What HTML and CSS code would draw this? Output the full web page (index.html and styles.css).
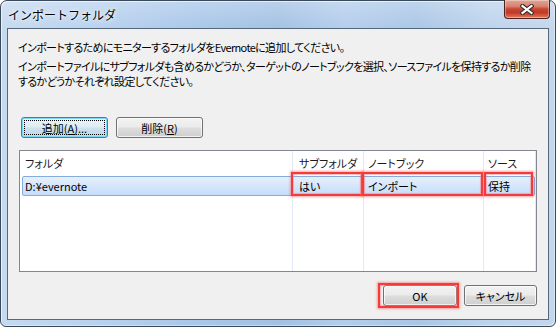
FILE: index.html
```html
<!DOCTYPE html>
<html lang="ja">
<head>
<meta charset="utf-8">
<link rel="stylesheet" href="styles.css">
</head>
<body>
<div class="window">
  <div class="titlebar">
    <span class="title">インポートフォルダ</span>
    <div class="close">
      <svg width="14" height="11" viewBox="0 0 14 11">
        <path d="M2.5 2 L11.5 9 M11.5 2 L2.5 9" stroke="#3a2a2a" stroke-width="4.2" stroke-linecap="square"/>
        <path d="M2.5 2 L11.5 9 M11.5 2 L2.5 9" stroke="#ffffff" stroke-width="2.2" stroke-linecap="square"/>
      </svg>
    </div>
  </div>
  <div class="client">
    <p class="desc">インポートするためにモニターするフォルダをEvernoteに追加してください。</p>
    <p class="desc desc2">インポートファイルにサブフォルダも含めるかどうか、ターゲットのノートブックを選択、ソースファイルを保持するか削除<br>するかどうかそれぞれ設定してください。</p>
    <div class="toolbar">
      <button class="btn btn-default"><span class="focus">追加(<u>A</u>)...</span></button>
      <button class="btn">削除(<u>R</u>)</button>
    </div>
    <div class="listview">
      <div class="lv-head">
        <div class="hcell c1">フォルダ</div>
        <div class="hcell c2">サブフォルダ</div>
        <div class="hcell c3">ノートブック</div>
        <div class="hcell c4">ソース</div>
      </div>
      <div class="lv-body">
        <div class="lv-row">
          <div class="rcell r1">D:¥evernote</div>
          <div class="rcell r2">はい</div>
          <div class="rcell r3">インポート</div>
          <div class="rcell r4">保持</div>
        </div>
      </div>
    </div>
    <div class="footer">
      <button class="btn btn-ok">OK</button>
      <button class="btn btn-cancel">キャンセル</button>
    </div>
  </div>
  <div class="mark mark-sub"></div>
  <div class="mark mark-nb"></div>
  <div class="mark mark-src"></div>
  <div class="mark mark-ok"></div>
</div>
</body>
</html>
```

FILE: styles.css
```css
* { box-sizing: border-box; }
html, body { margin: 0; padding: 0; }
body {
  width: 556px;
  height: 327px;
  overflow: hidden;
  background: #ffffff;
  font-family: "Noto Sans CJK JP", "Noto Sans", sans-serif;
  color: #000;
}
.window {
  position: relative;
  width: 556px;
  height: 327px;
  border: 1px solid #3b4a5a;
  border-radius: 7px 7px 6px 6px;
  padding: 0 6px 6px 6px;
  display: flex;
  flex-direction: column;
  background:
    linear-gradient(to bottom, rgba(255,255,255,0.25), rgba(255,255,255,0) 30px),
    linear-gradient(to right, #c6daef 0%, #b7d1ee 18%, #a9c7e9 35%, #a3c1e3 50%, #b2cdec 62%, #a9c6e6 75%, #bcd3ec 88%, #c3d7ec 100%);
  box-shadow: inset 1px 1px 0 rgba(255,255,255,0.6), inset -1px -1px 0 rgba(255,255,255,0.4);
}
.titlebar {
  height: 27px;
  flex: none;
  display: flex;
  align-items: center;
  padding-left: 1px;
}
.title {
  font-size: 12px;
  line-height: 14px;
  color: #000;
  margin-top: 1px;
  text-shadow: 0 0 6px rgba(255,255,255,0.9), 0 0 3px rgba(255,255,255,0.9);
}
.close {
  position: absolute;
  top: -1px;
  right: 5px;
  width: 46px;
  height: 19px;
  border: 1px solid #4a2320;
  border-top: none;
  border-radius: 0 0 4px 4px;
  background: linear-gradient(to bottom, #e3a597 0%, #d8836f 35%, #c64632 50%, #c23a27 70%, #d4634a 90%, #e08a6e 100%);
  box-shadow: inset 0 0 0 1px rgba(255,255,255,0.35);
  display: flex;
  align-items: center;
  justify-content: center;
}
.close svg { display: block; }
.client {
  flex: 1;
  border: 1px solid #56687c;
  background: #f0f0f0;
  display: flex;
  flex-direction: column;
  font-size: 11px;
}
.desc {
  margin: 11px 0 0 10px;
  line-height: 14px;
  font-size: 11px;
  font-feature-settings: "palt";
  letter-spacing: -0.65px;
  white-space: nowrap;
}
.desc2 { margin-top: 5px; line-height: 15px; }
.toolbar {
  margin: 28px 0 0 13px;
  display: flex;
  gap: 8px;
}
.btn {
  font-family: inherit;
  font-size: 11px;
  font-feature-settings: "palt";
  color: #000;
  height: 21px;
  width: 87px;
  padding: 0;
  border: 1px solid #707070;
  border-radius: 3px;
  background: linear-gradient(to bottom, #f2f2f2 0%, #ebebeb 48%, #dddddd 52%, #cfcfcf 100%);
  box-shadow: inset 0 0 0 1px rgba(255,255,255,0.75);
  display: flex;
  align-items: center;
  justify-content: center;
  line-height: 14px;
}
.btn u { text-underline-offset: 1px; }
.btn-default {
  border-color: #3c7fb1;
  background: linear-gradient(to bottom, #eaf3f8 0%, #dfecf4 48%, #cde1ee 52%, #c2d9e8 100%);
  box-shadow: inset 0 0 0 1px rgba(120,210,245,0.9);
  padding: 2px;
}
.focus {
  width: 100%;
  height: 100%;
  border: 1px dotted #000;
  display: flex;
  align-items: center;
  justify-content: center;
}
.listview {
  margin: 12px 0 0 11px;
  width: 518px;
  height: 122px;
  border: 1px solid #828790;
  background: #ffffff;
  display: flex;
  flex-direction: column;
}
.lv-head {
  height: 24px;
  flex: none;
  display: grid;
  grid-template-columns: 273px 71px 120px 52px;
}
.hcell {
  border-right: 1px solid #e3e8f0;
  font-size: 11px;
  line-height: 24px;
  font-feature-settings: "palt";
  color: #1a1a1a;
  white-space: nowrap;
}
.c1 { padding-left: 5px; }
.c2 { padding-left: 6px; }
.c3 { padding-left: 4px; }
.c4 { padding-left: 4px; }
.lv-body {
  flex: 1;
  padding: 1px 0 0 2px;
  background:
    linear-gradient(#e2e9f5, #e2e9f5) 272px 0 / 1px 100% no-repeat,
    linear-gradient(#e2e9f5, #e2e9f5) 343px 0 / 1px 100% no-repeat,
    linear-gradient(#e2e9f5, #e2e9f5) 463px 0 / 1px 100% no-repeat,
    linear-gradient(#e2e9f5, #e2e9f5) 515px 0 / 1px 100% no-repeat;
}
.lv-row {
  width: 513px;
  height: 20px;
  border: 1px solid #84acdd;
  border-radius: 2px;
  background: linear-gradient(to bottom, #e6f0fd 0%, #d6e6fb 50%, #c6ddfb 100%);
  display: grid;
  grid-template-columns: 270px 71px 120px 1fr;
  align-items: center;
}
.rcell {
  font-size: 11px;
  line-height: 18px;
  font-feature-settings: "palt";
  white-space: nowrap;
}
.r1 { padding-left: 2px; }
.r2 { padding-left: 6px; }
.r3 { padding-left: 4px; }
.r4 { padding-left: 4px; }
.footer {
  margin-top: 13px;
  padding-right: 11px;
  display: flex;
  justify-content: flex-end;
  gap: 7px;
}
.btn-ok { width: 74px; }
.btn-cancel { width: 73px; }
.mark {
  position: absolute;
  border: 2px solid #f23c3c;
  box-shadow: 0 0 2px 1px rgba(255, 90, 90, 0.55), inset 0 0 1px 1px rgba(255, 120, 120, 0.5);
}
.mark-sub { left: 290px; top: 171px; width: 72px; height: 24px; }
.mark-nb { left: 361px; top: 171px; width: 121px; height: 24px; }
.mark-src { left: 483px; top: 171px; width: 49px; height: 24px; }
.mark-ok { left: 377px; top: 282px; width: 81px; height: 25px; }
```
